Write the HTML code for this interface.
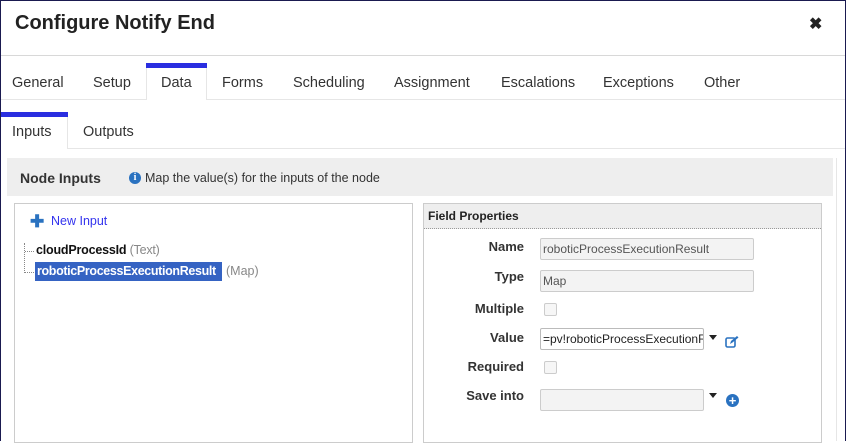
<!DOCTYPE html>
<html><head><style>
*{box-sizing:border-box;margin:0;padding:0}
body{width:846px;height:441px;overflow:hidden;font-family:"Liberation Sans",sans-serif;background:#fff;position:relative;color:#222}
.frame{position:absolute;left:0;top:0;width:846px;height:441px;border:1px solid #1a1a50;border-bottom:none}
.a{position:absolute;white-space:nowrap}
.tab{position:absolute;top:75px;font-size:14.5px;color:#333}
.lbl{position:absolute;font-weight:bold;font-size:13px;color:#333;text-align:right;width:100px;left:424px}
.inp{position:absolute;left:540px;border:1px solid #ccc;border-radius:2px;background:#f3f3f3;font-size:12px;color:#555;padding:3px 2px;height:22px;overflow:hidden;white-space:nowrap}
.cb{position:absolute;left:544px;width:13px;height:13px;border:1px solid #ccc;border-radius:2px;background:#f6f6f6}
.car{position:absolute;width:0;height:0;border-left:4px solid transparent;border-right:4px solid transparent;border-top:5px solid #222}
</style></head><body>
<div class="frame"></div>
<div class="a" style="left:15px;top:12px;font-size:20px;font-weight:bold;color:#222">Configure Notify End</div>
<div class="a" style="left:809px;top:14px;font-size:16px;font-weight:bold">✖</div>
<div class="a" style="left:1px;top:55px;width:844px;height:1px;background:#d8d8d8"></div>
<div class="a" style="left:1px;top:99px;width:844px;height:1px;background:#e6e6e6"></div>
<div class="a" style="left:146px;top:63px;width:61px;height:37px;background:#fff;border-left:1px solid #e6e6e6;border-right:1px solid #e6e6e6"></div>
<div class="a" style="left:146px;top:63px;width:61px;height:5px;background:#2a2ee0"></div>
<div class="tab" style="left:12px">General</div>
<div class="tab" style="left:93px">Setup</div>
<div class="tab" style="left:161px">Data</div>
<div class="tab" style="left:222px">Forms</div>
<div class="tab" style="left:293px">Scheduling</div>
<div class="tab" style="left:394px">Assignment</div>
<div class="tab" style="left:501px">Escalations</div>
<div class="tab" style="left:603px">Exceptions</div>
<div class="tab" style="left:704px">Other</div>
<div class="a" style="left:1px;top:148px;width:844px;height:1px;background:#e6e6e6"></div>
<div class="a" style="left:1px;top:112px;width:67px;height:37px;background:#fff;border-right:1px solid #e6e6e6"></div>
<div class="a" style="left:1px;top:112px;width:67px;height:5px;background:#2a2ee0"></div>
<div class="tab" style="left:12px;top:124px">Inputs</div>
<div class="tab" style="left:83px;top:124px">Outputs</div>
<div class="a" style="left:7px;top:158px;width:826px;height:38px;background:#eee"></div>
<div class="a" style="left:836px;top:158px;width:1px;height:283px;background:#e6e6e6"></div>
<div class="a" style="left:20px;top:170px;font-size:14px;font-weight:bold;color:#333">Node Inputs</div>
<div class="a" style="left:129px;top:172px;width:12px;height:12px;border-radius:50%;background:#2a72c0;color:#fff;font-size:10px;font-weight:bold;text-align:center;line-height:12px;font-family:'Liberation Serif',serif">i</div>
<div class="a" style="left:145px;top:171px;font-size:12.5px;color:#333">Map the value(s) for the inputs of the node</div>
<div class="a" style="left:14px;top:203px;width:399px;height:240px;border:1px solid #ccc"></div>
<div class="a" style="left:30px;top:213px;font-size:17px;font-weight:bold;color:#2a72c0;line-height:17px">✚</div>
<div class="a" style="left:51px;top:214px;font-size:12.5px;color:#3333ee">New Input</div>
<div class="a" style="left:24px;top:243px;width:1px;height:30px;border-left:1px dotted #888"></div>
<div class="a" style="left:25px;top:251px;width:9px;border-top:1px dotted #888"></div>
<div class="a" style="left:25px;top:272px;width:9px;border-top:1px dotted #888"></div>
<div class="a" style="left:36px;top:243px;font-size:12.5px;font-weight:bold;color:#111;letter-spacing:-0.2px">cloudProcessId <span style="font-weight:normal;color:#888">(Text)</span></div>
<div class="a" style="left:35px;top:262px;width:187px;height:19px;background:#3563c3"></div>
<div class="a" style="left:37px;top:264px;font-size:12.5px;font-weight:bold;color:#fff;letter-spacing:-0.35px">roboticProcessExecutionResult</div>
<div class="a" style="left:226px;top:264px;font-size:12.5px;color:#888">(Map)</div>
<div class="a" style="left:423px;top:203px;width:399px;height:240px;border:1px solid #ccc"></div>
<div class="a" style="left:424px;top:204px;width:397px;height:25px;background:#eee;border-bottom:1px dotted #999"></div>
<div class="a" style="left:428px;top:209px;font-size:12px;font-weight:bold;color:#222">Field Properties</div>
<div class="lbl" style="top:239px">Name</div>
<div class="lbl" style="top:269px">Type</div>
<div class="lbl" style="top:301px">Multiple</div>
<div class="lbl" style="top:330px">Value</div>
<div class="lbl" style="top:359px">Required</div>
<div class="lbl" style="top:388px">Save into</div>
<div class="inp" style="top:238px;width:214px">roboticProcessExecutionResult</div>
<div class="inp" style="top:270px;width:214px">Map</div>
<div class="cb" style="top:303px"></div>
<div class="inp" style="top:328px;width:164px;background:#fff;color:#222;border-color:#bbb">=pv!roboticProcessExecutionRe</div>
<div class="car" style="left:709px;top:335px"></div>
<svg class="a" style="left:725px;top:335px" width="14" height="13" viewBox="0 0 14 13"><rect x="1" y="3" width="9" height="9" rx="1.5" fill="none" stroke="#2a72c0" stroke-width="1.6"/><path d="M5 9l1-3 6-5 1.5 1.5-6 5z" fill="#2a72c0"/></svg>
<div class="cb" style="top:361px"></div>
<div class="inp" style="top:389px;width:164px"></div>
<div class="car" style="left:709px;top:393px"></div>
<div class="a" style="left:726px;top:394px;width:13px;height:13px;border-radius:50%;background:#2a72c0;color:#fff;font-size:13px;font-weight:bold;text-align:center;line-height:13px">+</div>
</body></html>
